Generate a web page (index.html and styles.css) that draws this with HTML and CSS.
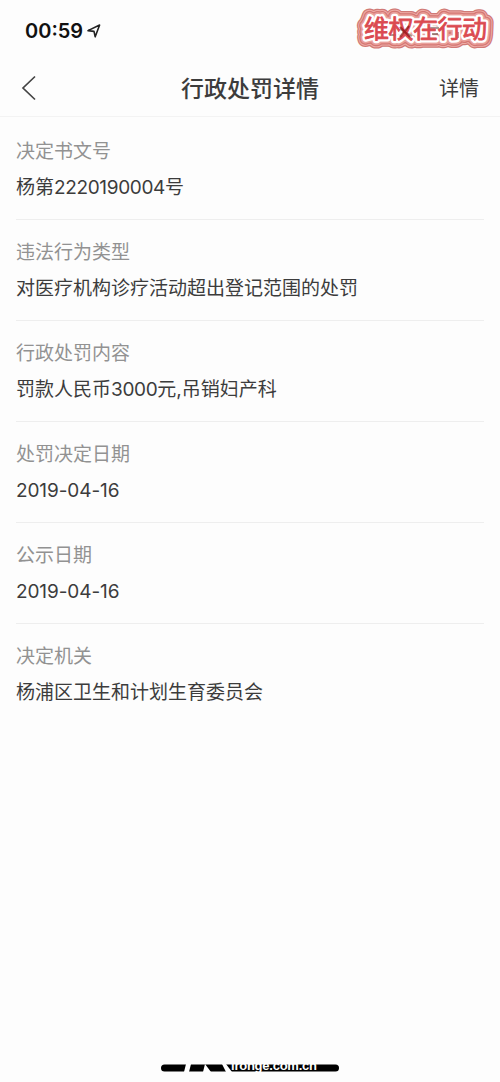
FILE: index.html
```html
<!DOCTYPE html>
<html lang="zh-CN">
<head>
    <meta charset="UTF-8">
    <meta name="viewport" content="width=device-width, initial-scale=1.0">
    <title>行政处罚详情</title>
    <link rel="stylesheet" href="styles.css">
</head>
<body>
    <div class="status-bar">
        <span class="time">00:59</span>
        <svg class="location" width="14" height="14" viewBox="0 0 14 14">
            <path d="M1 6.6 L12.6 1 L8.2 12.8 L7 7.4 Z"/>
        </svg>
    </div>
    <svg class="stamp" width="144" height="48" viewBox="0 0 144 48">
        <g class="stamp-text">
            <text class="ring ring-5" x="11" y="32.5" textLength="123">维权在行动</text>
            <text class="ring ring-4" x="11" y="32.5" textLength="123">维权在行动</text>
            <text class="ring ring-3" x="11" y="32.5" textLength="123">维权在行动</text>
            <text class="ring ring-2" x="11" y="32.5" textLength="123">维权在行动</text>
            <text class="ring ring-1" x="11" y="32.5" textLength="123">维权在行动</text>
            <path class="shade" d="M37 30 H43 M47 24 L59 31 M76 23 H86 M79 29 H85 M105 27 V33"/>
            <text class="ring ring-0" x="11" y="32.5" textLength="123">维权在行动</text>
            <path class="dark" d="M47 22 L57 32 M56 21 L47 32"/>
        </g>
    </svg>

    <header class="nav">
        <svg class="back" width="16" height="26" viewBox="0 0 16 26">
            <path d="M14 1.5 L2 13 L14 24.5"/>
        </svg>
        <h1>行政处罚详情</h1>
        <a class="more">详情</a>
    </header>

    <main class="list">
        <div class="item">
            <div class="label">决定书文号</div>
            <div class="value">杨第<span class="num">2220190004</span>号</div>
        </div>
        <div class="item">
            <div class="label">违法行为类型</div>
            <div class="value">对医疗机构诊疗活动超出登记范围的处罚</div>
        </div>
        <div class="item">
            <div class="label">行政处罚内容</div>
            <div class="value">罚款人民币<span class="num">3000</span>元,吊销妇产科</div>
        </div>
        <div class="item">
            <div class="label">处罚决定日期</div>
            <div class="value date">2019-04-16</div>
        </div>
        <div class="item">
            <div class="label">公示日期</div>
            <div class="value date">2019-04-16</div>
        </div>
        <div class="item">
            <div class="label">决定机关</div>
            <div class="value">杨浦区卫生和计划生育委员会</div>
        </div>
    </main>

    <svg class="home" width="180" height="20" viewBox="0 0 180 20">
        <rect x="1" y="6.5" width="178" height="7" rx="3.5"/>
        <path class="cut" d="M26 6 H31 L29 14 H24 Z M45 6 L51 14 H43 Z M62 6 H66 L72 14 H66 Z"/>
        <text class="site" x="71" y="12" textLength="86">ironge.com.cn</text>
    </svg>
</body>
</html>
```
FILE: styles.css
```css
* {
    box-sizing: border-box;
}
body {
    position: relative;
    display: flex;
    flex-direction: column;
    height: 1082px;
    margin: 0;
    overflow: hidden;
    background-color: #fdfdfd;
    color: #3c3c3c;
    font-family: Inter, "Noto Sans CJK SC", sans-serif;
}
.status-bar {
    display: flex;
    align-items: center;
    gap: 4px;
    height: 60px;
    padding: 2px 0 0 25px;
}
.time {
    color: #111;
    font-size: 20px;
    font-weight: 600;
}
.location {
    fill: none;
    stroke: #222;
    stroke-width: 1.6;
    stroke-linejoin: round;
}
.stamp {
    position: absolute;
    top: 5px;
    left: 353px;
}
.stamp-text {
    font-family: "Noto Sans CJK SC", sans-serif;
    font-size: 25px;
    font-weight: 400;
}
.ring {
    stroke-linejoin: round;
}
.ring-5 {
    fill: #d07a76;
    stroke: #d07a76;
    stroke-width: 16px;
}
.ring-4 {
    fill: #efaca7;
    stroke: #efaca7;
    stroke-width: 13.5px;
}
.ring-3 {
    fill: #d47773;
    stroke: #d47773;
    stroke-width: 11.5px;
}
.ring-2 {
    fill: #e9a09b;
    stroke: #e9a09b;
    stroke-width: 9px;
}
.ring-1 {
    fill: #fff;
    stroke: #fff;
    stroke-width: 5.5px;
}
.ring-0 {
    fill: #db4a50;
    stroke: #db4a50;
    stroke-width: 0.8px;
}
.shade {
    fill: none;
    stroke: #6b5552;
    stroke-width: 2px;
    opacity: 0.6;
}
.dark {
    fill: none;
    stroke: #8f1216;
    stroke-width: 2px;
    opacity: 0.75;
}
.nav {
    display: grid;
    grid-template-columns: 80px 1fr 80px;
    align-items: center;
    height: 57px;
    padding: 0 21px;
    border-bottom: 1px solid #f3f3f3;
}
.back {
    fill: none;
    stroke: #444;
    stroke-width: 1.7;
}
.nav h1 {
    margin: 0;
    padding-top: 2px;
    font-size: 23px;
    font-weight: 500;
    line-height: 34px;
    text-align: center;
}
.more {
    padding-top: 2px;
    font-size: 20px;
    line-height: 30px;
    text-align: right;
}
.list {
    padding: 1.5px 16px 0;
}
.item {
    height: 101.2px;
    padding-top: 18px;
    border-bottom: 1px solid #eee;
    font-size: 19px;
    line-height: 30px;
}
.item:last-child {
    border-bottom: 0;
}
.label {
    color: #929292;
}
.value {
    margin-top: 6px;
}
.num {
    letter-spacing: -0.35px;
}
.date {
    letter-spacing: -0.1px;
}
.home {
    position: absolute;
    left: 160px;
    top: 1058px;
}
.cut, .site {
    fill: #fff;
}
.site {
    font-family: "Liberation Sans", Arial, sans-serif;
    font-size: 13px;
    font-weight: bold;
}
```
